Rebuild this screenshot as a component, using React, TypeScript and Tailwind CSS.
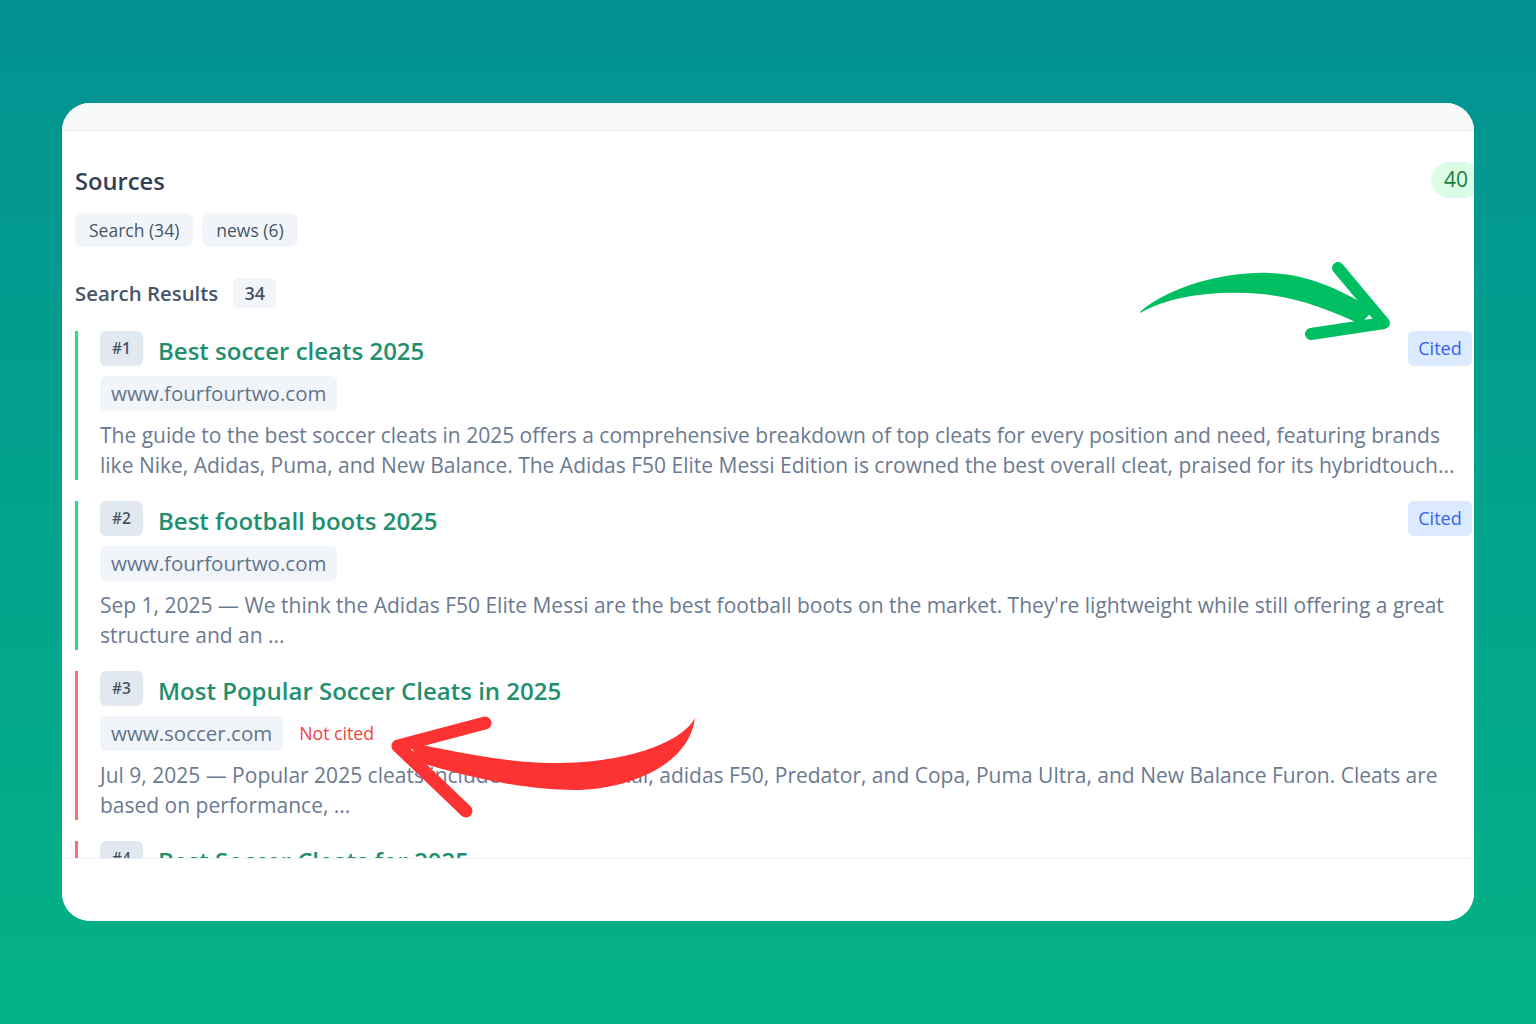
import React from 'react';

type Result = {
  n: number;
  title: string;
  domain: string;
  cited: boolean;
  desc: string;
};

const results: Result[] = [
  {
    n: 1,
    title: 'Best soccer cleats 2025',
    domain: 'www.fourfourtwo.com',
    cited: true,
    desc: 'The guide to the best soccer cleats in 2025 offers a comprehensive breakdown of top cleats for every position and need, featuring brands like Nike, Adidas, Puma, and New Balance. The Adidas F50 Elite Messi Edition is crowned the best overall cleat, praised for its hybridtouch...',
  },
  {
    n: 2,
    title: 'Best football boots 2025',
    domain: 'www.fourfourtwo.com',
    cited: true,
    desc: "Sep 1, 2025 — We think the Adidas F50 Elite Messi are the best football boots on the market. They're lightweight while still offering a great structure and an ...",
  },
  {
    n: 3,
    title: 'Most Popular Soccer Cleats in 2025',
    domain: 'www.soccer.com',
    cited: false,
    desc: 'Jul 9, 2025 — Popular 2025 cleats include Nike Mercurial, adidas F50, Predator, and Copa, Puma Ultra, and New Balance Furon. Cleats are based on performance, ...',
  },
  {
    n: 4,
    title: 'Best Soccer Cleats for 2025',
    domain: 'www.prodirectsoccer.com',
    cited: false,
    desc: 'A look at the top boots of the season across speed, control and touch categories, tested on firm ground and artificial grass ...',
  },
];

function ResultItem({ r }: { r: Result }) {
  return (
    <div
      className={
        'flex h-[149px] border-l-[3px] pl-[22px] ' +
        (r.cited ? 'border-[#26de7e]' : 'border-[#f87171]')
      }>
      <div className="flex flex-1 flex-col">
        <div className="flex h-[35px] items-center justify-between">
          <div className="flex items-center gap-[15px]">
            <span className="flex h-[35px] w-[43px] items-center justify-center rounded-md bg-[#e2e8f0] text-[15.5px] font-semibold text-[#475569]">
              #{r.n}
            </span>
            <span className="pt-[4px] text-[24px] font-semibold leading-none text-[#1f8f6f]">{r.title}</span>
          </div>
          {r.cited ? (
            <span className="flex h-[35px] w-[64px] items-center justify-center rounded-md bg-[#dbeafe] text-[18px] text-[#3563e9]">
              Cited
            </span>
          ) : null}
        </div>
        <div className="mt-[10px] flex h-[35px] items-center gap-4">
          <span className="flex h-[35px] items-center rounded-md bg-[#f1f5f9] px-[11px] text-[20.5px] text-[#64748b]">
            {r.domain}
          </span>
          {!r.cited ? <span className="text-[17.7px] text-[#ef4444]">Not cited</span> : null}
        </div>
        <p className="mt-[9px] text-[21px] leading-[30px] text-[#6b7a90]">{r.desc}</p>
      </div>
    </div>
  );
}

function Arrows() {
  return (
    <svg
      className="pointer-events-none absolute left-0 top-0"
      width="1536"
      height="1024"
      viewBox="0 0 1536 1024">
      <path
        d="M1140 312 C1170 285 1230 271 1270 273 C1310 274 1345 292 1374 310 L1360 324 C1330 310 1300 298 1262 294 C1215 290 1170 296 1140 313 Z"
        fill="#00bf62"
      />
      <path
        d="M1338 268 L1384 323 L1311 334"
        fill="none"
        stroke="#00bf62"
        strokeWidth="12"
        strokeLinecap="round"
        strokeLinejoin="round"
      />
      <path
        d="M695 718 C680 745 620 764 550 763 C500 762 450 750 410 743 L418 762 C470 778 530 791 580 790 C640 787 690 760 695 718 Z"
        fill="#fd3232"
      />
      <path
        d="M485 723 L398 746 L466 811"
        fill="none"
        stroke="#fd3232"
        strokeWidth="13"
        strokeLinecap="round"
        strokeLinejoin="round"
      />
    </svg>
  );
}

export default function App() {
  return (
    <div className="relative h-[1024px] w-[1536px] overflow-hidden bg-linear-to-b from-[#039292] to-[#05b285] pl-[62px] pt-[103px] font-['Open_Sans',sans-serif]">
      <div className="flex h-[818px] w-[1412px] flex-col overflow-hidden rounded-[28px] bg-white">
        <div className="h-[28px] shrink-0 border-b border-[#e6e8ee] bg-[#f8f9fb]" />
        <div className="h-[727px] shrink-0 overflow-hidden pl-[13px] pt-[31px]">
          <div className="w-[1406px]">
            <div className="flex h-[36px] items-center justify-between">
              <h2 className="pt-[3px] text-[23.7px] font-semibold text-[#334155]">Sources</h2>
              <span className="flex h-[36px] items-center rounded-full bg-[#dcfce7] px-[13px] text-[21px] text-[#15803d]">
                40
              </span>
            </div>
            <div className="mt-[15px] flex gap-[9px]">
              <span className="flex h-[34px] items-center rounded-lg bg-[#f1f5f9] px-[14px] text-[17.5px] text-[#475569]">
                Search (34)
              </span>
              <span className="flex h-[34px] items-center rounded-lg bg-[#f1f5f9] px-[14px] text-[17.5px] text-[#475569]">
                news (6)
              </span>
            </div>
            <div className="mt-[31px] flex h-[30px] items-center gap-[15px]">
              <h3 className="text-[20.4px] font-semibold text-[#475569]">Search Results</h3>
              <span className="flex h-[30px] w-[43px] items-center justify-center rounded-md bg-[#f1f5f9] text-[18px] font-semibold text-[#475569]">
                34
              </span>
            </div>
            <div className="mt-[23px] flex w-[1397px] flex-col gap-[21px]">
              {results.map((r) => (
                <ResultItem key={r.n} r={r} />
              ))}
            </div>
          </div>
        </div>
        <div className="flex-1 border-t border-[#eef2f7] bg-white" />
      </div>
      <Arrows />
    </div>
  );
}
